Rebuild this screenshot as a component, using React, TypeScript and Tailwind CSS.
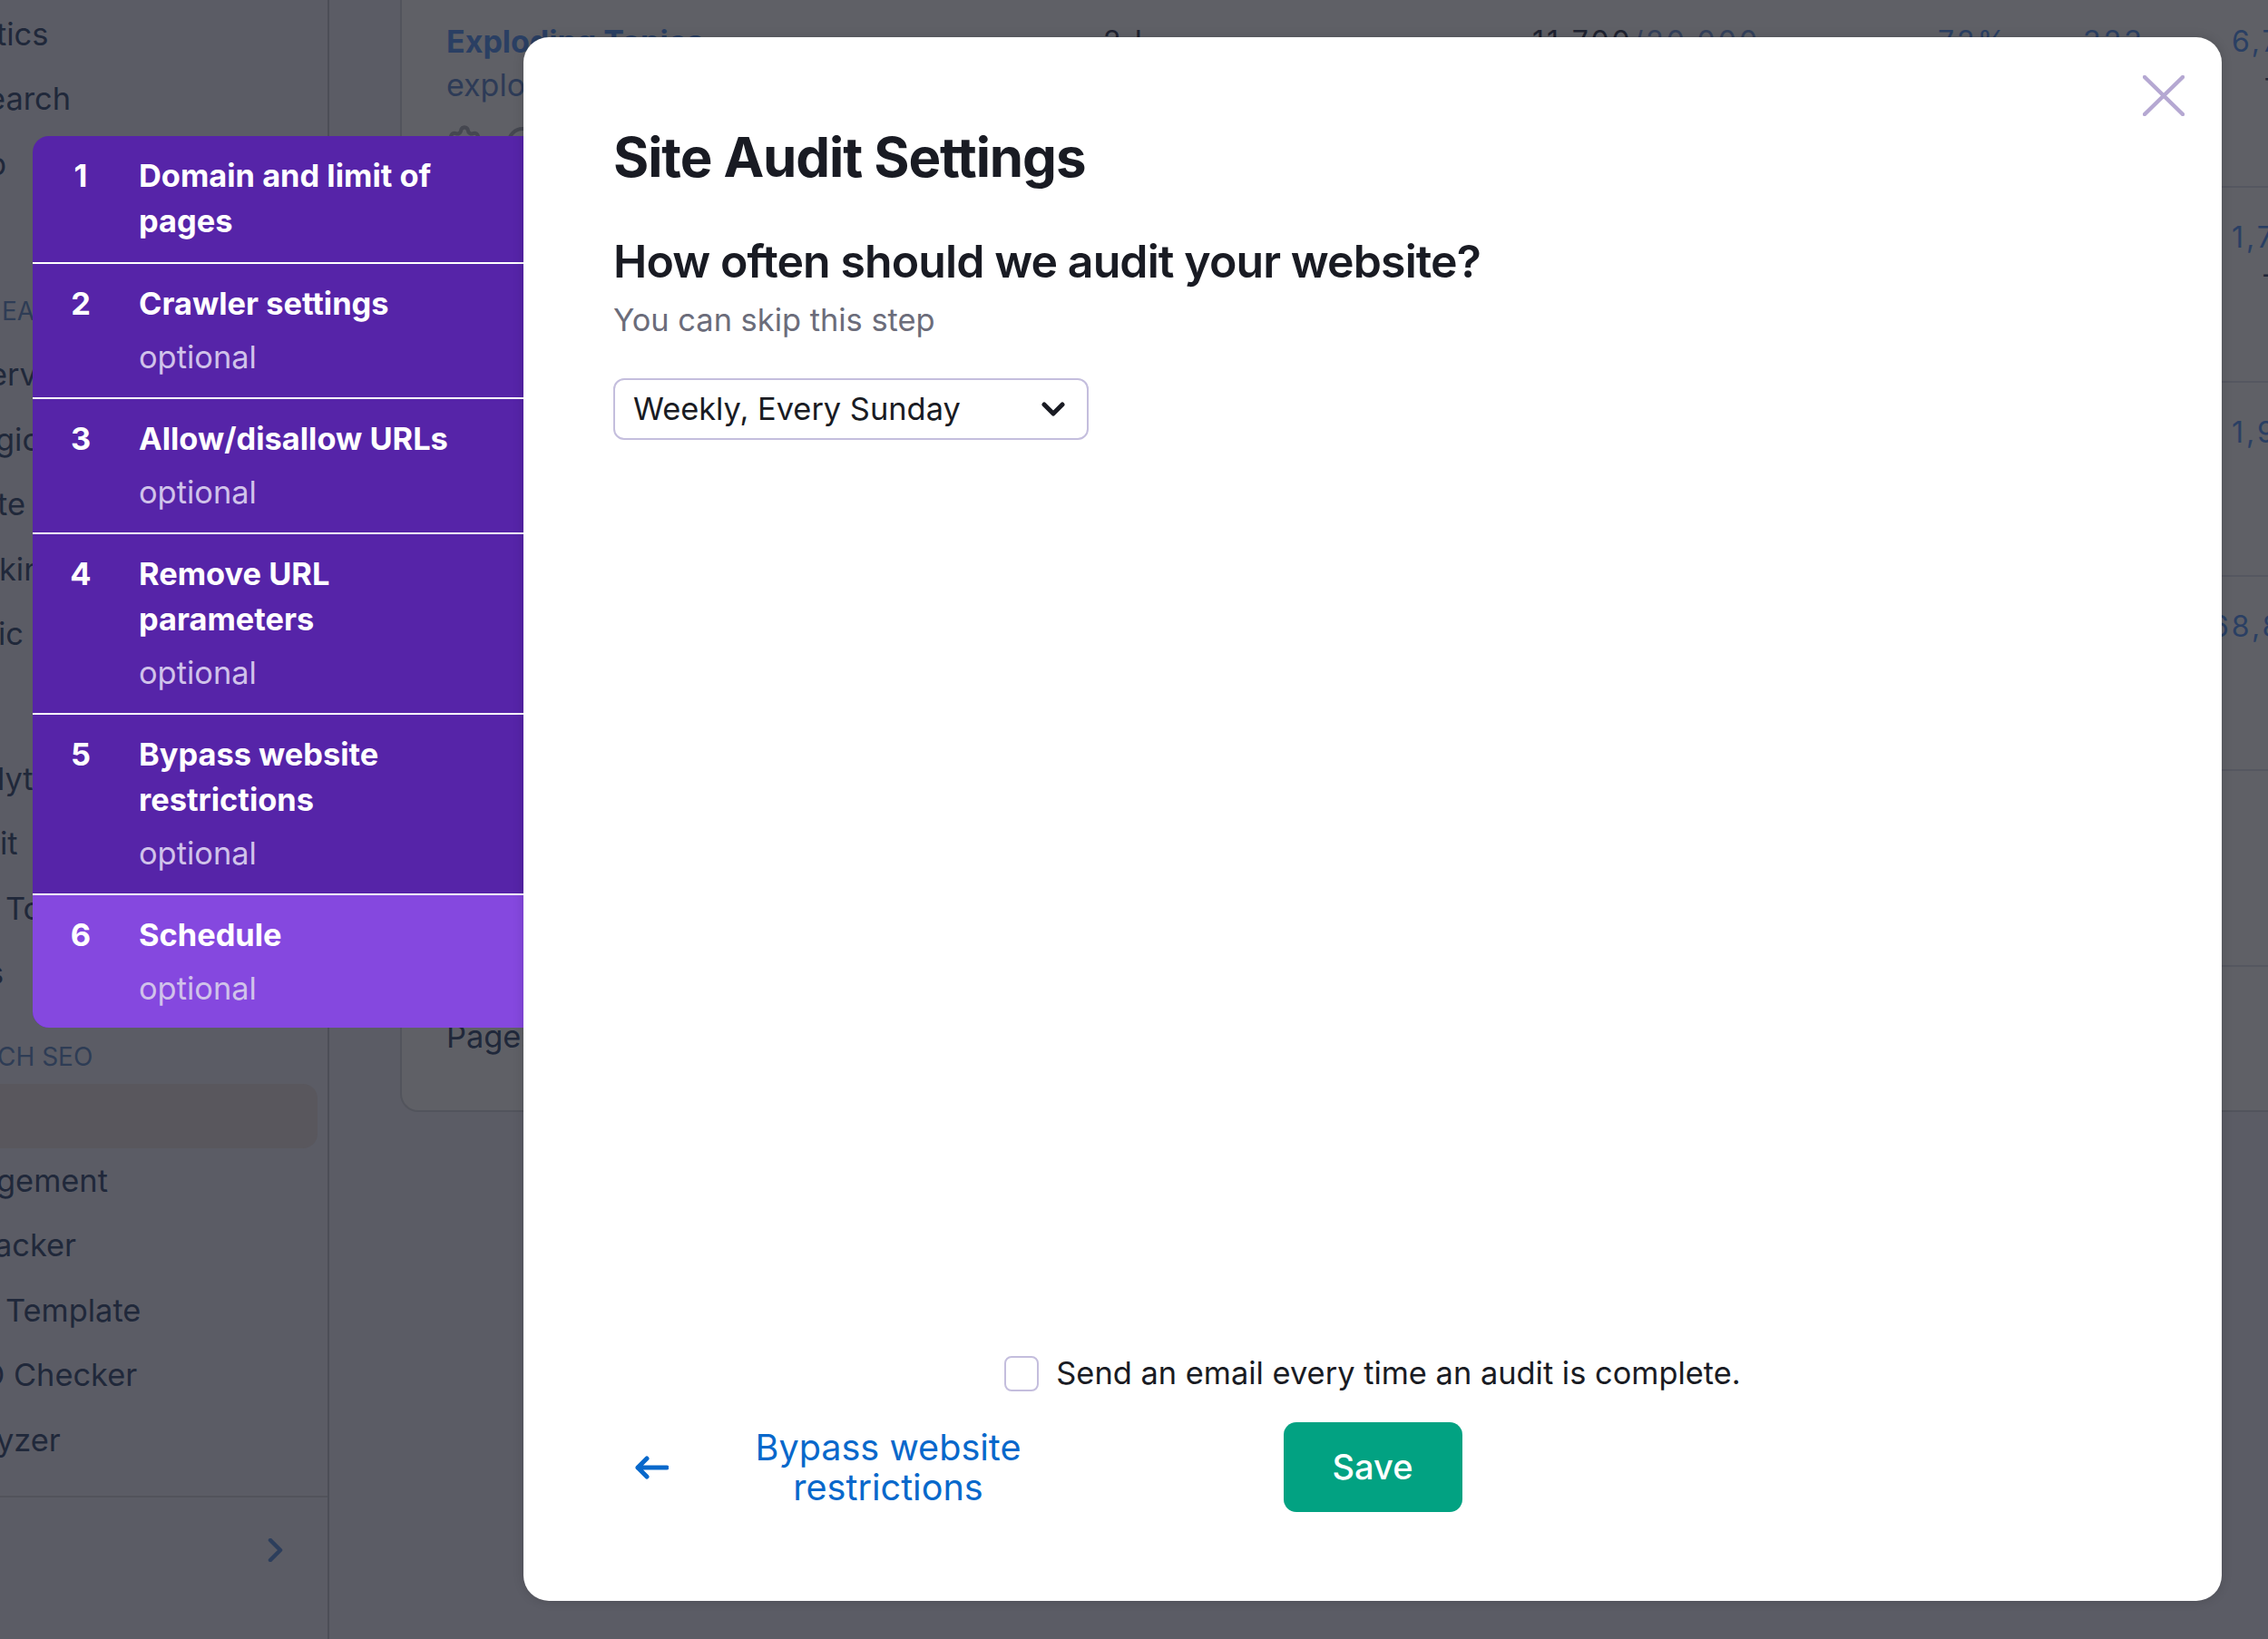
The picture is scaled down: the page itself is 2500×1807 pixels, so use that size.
import { RotateCw, Settings } from 'lucide-react'

const topItems = [
  { label: 'tics', className: '-ml-[4px]' },
  { label: 'earch', className: '-ml-[14px]' },
  { label: 'p', className: '-ml-[14px]' },
]
const keywordItems = [
  { label: 'erview', className: '-ml-[12px]' },
  { label: 'gic', className: '-ml-[5px]' },
  { label: 'te', className: '-ml-[3px]' },
  { label: 'kin', className: '-ml-[1px]' },
  { label: 'ic', className: '-ml-[2px]' },
]
const linkItems = [
  { label: 'lyt', className: '-ml-[3px]' },
  { label: 'it', className: 'ml-0' },
  { label: 'Tool', className: 'ml-[6px]' },
  { label: 's', className: '-ml-[14px]' },
]
const seoItems = [
  { label: 'gement', className: '-ml-[4px]' },
  { label: 'acker', className: '-ml-[6px]' },
  { label: 'Template', className: 'ml-[6px]' },
  { label: 'O Checker', className: '-ml-[21px]' },
  { label: 'yzer', className: '-ml-[4px]' },
]

const steps = [
  { n: 1, title: 'Domain and limit of pages', optional: false, rowClass: 'pb-[20px]' },
  { n: 2, title: 'Crawler settings', optional: true, rowClass: 'border-t-2 border-white pb-[19px]' },
  { n: 3, title: 'Allow/disallow URLs', optional: true, rowClass: 'border-t-2 border-white pb-[19px]' },
  { n: 4, title: 'Remove URL parameters', optional: true, rowClass: 'border-t-2 border-white pb-[19px]' },
  { n: 5, title: 'Bypass website restrictions', optional: true, rowClass: 'border-t-2 border-white pb-[19px]' },
  { n: 6, title: 'Schedule', optional: true, rowClass: 'border-t-2 border-white bg-[#8548df] pb-[18px]' },
]

function SideList({ items }: { items: { label: string; className: string }[] }) {
  return (
    <ul>
      {items.map((item) => (
        <li
          key={item.label}
          className={`flex h-[71.5px] items-center whitespace-nowrap text-[34.4px] text-[#20283a] ${item.className}`}
        >
          {item.label}
        </li>
      ))}
    </ul>
  )
}

function Sidebar() {
  return (
    <aside className="flex h-full w-[363px] shrink-0 flex-col overflow-hidden border-r-2 border-[#4c4e57] pt-[2px]">
      <SideList items={topItems} />
      <div className="mt-[106px] mb-[15px] flex h-[40px] items-center pl-[2px] text-[28px] text-[#2e3c55]">
        EA
      </div>
      <SideList items={keywordItems} />
      <div className="h-[88px]" />
      <SideList items={linkItems} />
      <div className="mt-[36px] -ml-[3px] flex h-[40px] items-center whitespace-nowrap text-[28px] text-[#2e3c55]">
        CH SEO
      </div>
      <div className="mt-[10px] h-[71px] w-[350px] rounded-r-[16px] bg-[#59575d]" />
      <SideList items={seoItems} />
      <div className="mt-[25px] flex flex-1 items-start justify-end border-t-2 border-[#52535b] pt-[45px] pr-[49px]">
        <svg width="17" height="26" viewBox="0 0 17 26" fill="none">
          <path d="M3 2 L14 13 L3 24" stroke="#2c3e5c" strokeWidth="4.5" strokeLinecap="round" strokeLinejoin="round" />
        </svg>
      </div>
    </aside>
  )
}

function Table() {
  return (
    <div className="ml-[78px] h-[1226px] flex-1 overflow-hidden rounded-bl-[20px] border-b-2 border-l-2 border-[#52545c] bg-[#5f6066] pl-[49px] text-[#2a3f63]">
      <div className="grid h-[207px] grid-cols-[724px_473px_447px_160px_164px_1fr] border-b-2 border-[#555760] pt-[26px] text-[32px] leading-[40px] tracking-[3px]">
        <div className="tracking-normal">
          <div className="text-[34px] font-bold">Exploding Topics</div>
          <div className="mt-[8px] text-[34px] text-[#2d3b57]">explodingtopics.com</div>
          <div className="mt-[23px] flex gap-[24px] text-[#454750]">
            <Settings size={40} strokeWidth={2.5} />
            <RotateCw size={40} strokeWidth={2.5} />
          </div>
        </div>
        <div className="text-[#1e2230]">2 L</div>
        <div className="text-[#33415c]">
          <span className="text-[#1e2230]">11,700</span>/20,000
        </div>
        <div>72%</div>
        <div>323</div>
        <div className="whitespace-nowrap">
          6,7
          <div className="ml-[35px] text-[#20283a]">-</div>
        </div>
      </div>
      <Row value="1,7" sub="+" className="h-[215px]" />
      <Row value="1,9" className="h-[214px]" />
      <Row value="68,8" valueClass="-ml-[23px]" className="h-[214px]" />
      <Row className="h-[216px]" />
      <div className="pt-[57px] text-[34.4px] leading-[40px] text-[#20283a]">Page:</div>
    </div>
  )
}

function Row({
  value,
  sub,
  valueClass,
  className,
}: {
  value?: string
  sub?: string
  valueClass?: string
  className: string
}) {
  return (
    <div className={`border-b-2 border-[#555760] pt-[35px] pl-[1968px] text-[32px] leading-[40px] tracking-[3px] ${className}`}>
      <div className={`whitespace-nowrap ${valueClass ?? ''}`}>{value}</div>
      {sub && <div className="ml-[32px] text-[#20283a]">{sub}</div>}
    </div>
  )
}

function Steps() {
  return (
    <ol className="mt-[109px] w-[541px] shrink-0 self-start overflow-hidden rounded-l-[18px] bg-[#5624a8] text-white">
      {steps.map((step) => (
        <li key={step.n} className={`flex gap-[47px] pt-[19px] pl-[36px] ${step.rowClass}`}>
          <div className="w-[34px] text-center text-[34.4px] leading-[50px] font-bold">{step.n}</div>
          <div className="w-[360px]">
            <div className="text-[34.4px] leading-[50px] font-bold">{step.title}</div>
            {step.optional && <div className="mt-[9px] text-[34.4px] leading-[50px] text-[#d0c2ea]">optional</div>}
          </div>
        </li>
      ))}
    </ol>
  )
}

function Modal() {
  return (
    <section className="relative flex h-[1724px] w-[1872px] shrink-0 flex-col rounded-[28px] bg-white pt-[100px] pr-[99px] pb-[98px] pl-[99px] text-[#191b23] shadow-[0_0_12px_rgba(0,0,0,0.15)]">
      <button className="absolute top-[42px] right-[41px]">
        <svg width="46" height="45" viewBox="0 0 46 45" fill="none" className="block">
          <path d="M2 2 L44 43 M44 2 L2 43" stroke="#b5a8d2" strokeWidth="4.5" strokeLinecap="round" />
        </svg>
      </button>
      <h1 className="text-[60px] leading-[64px] font-bold tracking-[-1.1px]">Site Audit Settings</h1>
      <h2 className="mt-[54px] text-[50px] leading-[58px] font-semibold tracking-[-0.9px]">How often should we audit your website?</h2>
      <p className="mt-[12px] text-[34.4px] leading-[48px] text-[#6b6c7a]">You can skip this step</p>
      <div className="mt-[40px] flex h-[68px] w-[524px] items-center justify-between rounded-[12px] border-2 border-[#c4bedd] pr-[24px] pl-[20px] text-[34.4px]">
        Weekly, Every Sunday
        <svg width="26" height="16" viewBox="0 0 26 16" fill="none">
          <path d="M3 3 L13 13 L23 3" stroke="#191b23" strokeWidth="5" strokeLinecap="round" strokeLinejoin="round" />
        </svg>
      </div>
      <div className="mt-auto flex items-center justify-center gap-[19px] text-[34.4px] leading-[40px]">
        <span className="h-[39px] w-[38px] rounded-[8px] border-2 border-[#c4bedd]" />
        Send an email every time an audit is complete.
      </div>
      <div className="mt-[34px] grid grid-cols-[1fr_auto_1fr] items-center">
        <a className="flex items-center pl-[24px] text-[#0868cb]">
          <svg width="37" height="26" viewBox="0 0 37 26" fill="none" className="shrink-0">
            <path d="M35 13 H3 M13 3 L3 13 L13 23" stroke="#0868cb" strokeWidth="5" strokeLinecap="round" strokeLinejoin="round" />
          </svg>
          <span className="ml-[90px] w-[304px] text-center text-[39.6px] leading-[44px]">Bypass website restrictions</span>
        </a>
        <button className="h-[99px] w-[197px] rounded-[14px] bg-[#02a282] text-[38px] font-medium text-white">Save</button>
        <div />
      </div>
    </section>
  )
}

export default function App() {
  return (
    <div className="relative h-[1807px] w-[2500px] overflow-hidden bg-[#5b5c65] font-[Inter,sans-serif]">
      <div className="flex h-full">
        <Sidebar />
        <Table />
      </div>
      <div className="absolute inset-0 flex pt-[41px] pl-[36px]">
        <Steps />
        <Modal />
      </div>
    </div>
  )
}
